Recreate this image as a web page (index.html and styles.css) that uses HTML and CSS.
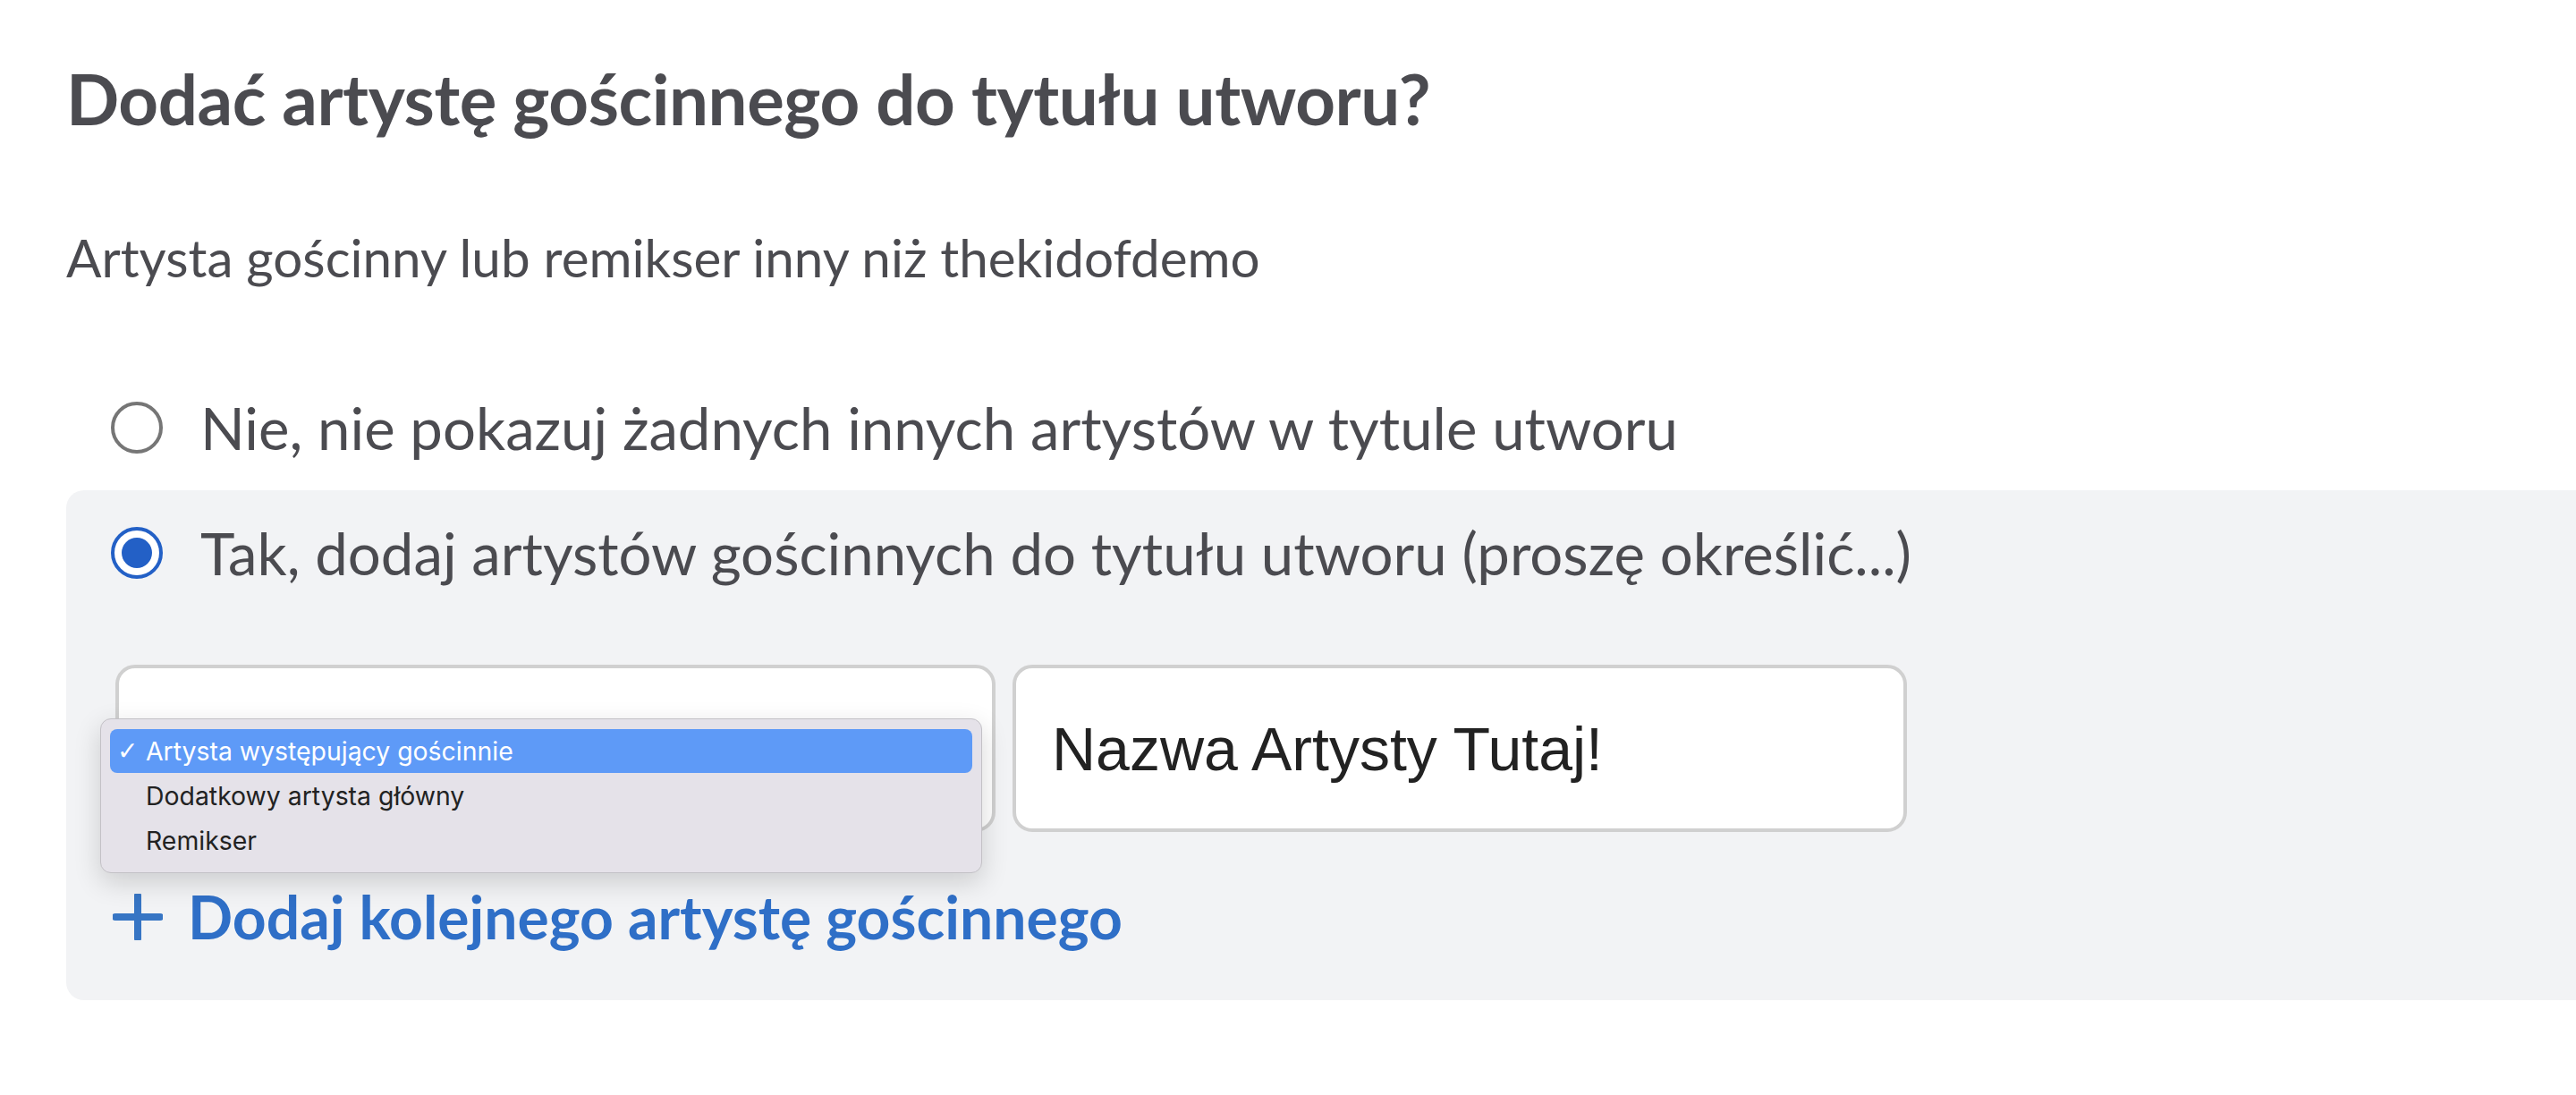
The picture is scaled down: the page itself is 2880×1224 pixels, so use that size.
FILE: index.html
```html
<!DOCTYPE html>
<html lang="pl">
<head>
    <meta charset="UTF-8">
    <meta name="viewport" content="width=device-width, initial-scale=1.0">
    <title>Artysta gościnny</title>
    <link rel="stylesheet" href="styles.css">
</head>
<body>
    <div class="container">
        <h1>Dodać artystę gościnnego do tytułu utworu?</h1>
        <p class="subtitle">Artysta gościnny lub remikser inny niż thekidofdemo</p>

        <!-- Option: no featured artists -->
        <label class="option-row">
            <svg class="radio" width="58" height="58" viewBox="0 0 58 58">
                <circle cx="29" cy="29" r="27" fill="#fff" stroke="#767676" stroke-width="4"/>
            </svg>
            <span>Nie, nie pokazuj żadnych innych artystów w tytule utworu</span>
        </label>

        <!-- Option: add featured artists -->
        <div class="panel">
            <label class="option-row">
                <svg class="radio" width="58" height="58" viewBox="0 0 58 58">
                    <circle cx="29" cy="29" r="27" fill="#fff" stroke="#2360c6" stroke-width="4"/>
                    <circle cx="29" cy="29" r="17" fill="#2360c6"/>
                </svg>
                <span>Tak, dodaj artystów gościnnych do tytułu utworu (proszę określić...)</span>
            </label>

            <div class="artist-row">
                <div class="select-box">
                    <ul class="popup-menu">
                        <li class="menu-item selected"><span class="check">✓</span>Artysta występujący gościnnie</li>
                        <li class="menu-item">Dodatkowy artysta główny</li>
                        <li class="menu-item">Remikser</li>
                    </ul>
                </div>
                <div class="name-input">Nazwa Artysty Tutaj!</div>
            </div>

            <a class="add-link" href="#">
                <svg width="56" height="52" viewBox="0 0 56 52">
                    <path d="M28 2 V50 M3 26 H53" stroke="#3775c4" stroke-width="8" stroke-linecap="round"/>
                </svg>
                <span>Dodaj kolejnego artystę gościnnego</span>
            </a>
        </div>
    </div>
</body>
</html>
```

FILE: styles.css
```css
body {
    margin: 0;
    padding: 0;
    background-color: #fff;
    font-family: 'Lato', 'Noto Sans', sans-serif;
    color: #4b4b50;
    overflow: hidden;
}

.container {
    padding-left: 74px;
}

h1 {
    margin: 62px 0 0 0;
    font-size: 78px;
    line-height: 96px;
    letter-spacing: -0.45px;
    font-weight: 700;
    color: #4b4b50;
}

.subtitle {
    margin: 94px 0 0 0;
    font-size: 58.4px;
    line-height: 70px;
}

.option-row {
    display: flex;
    align-items: center;
    gap: 42px;
    height: 80px;
    padding-left: 50px;
    font-size: 65.3px;
    line-height: 80px;
    margin-top: 116px;
}

.radio {
    flex-shrink: 0;
}

.panel {
    margin-top: 30px;
    margin-right: -40px;
    padding: 30px 0 53px 50px;
    background-color: #f2f3f5;
    border-radius: 20px;
}

.panel .option-row {
    margin-top: 0;
    padding-left: 0;
}

.artist-row {
    display: flex;
    gap: 19px;
    margin: 85px 0 0 5px;
}

.select-box,
.name-input {
    height: 179px;
    border: 4px solid #d0d0d0;
    border-radius: 22px;
    background-color: #fff;
}

.select-box {
    position: relative;
    width: 976px;
}

.name-input {
    width: 952px;
    padding-left: 40px;
    display: flex;
    align-items: center;
    font-family: 'Liberation Sans', Arial, sans-serif;
    font-size: 68px;
    color: #222;
}

/* native popup menu drawn over the select */
.popup-menu {
    position: absolute;
    left: -21px;
    top: 56px;
    width: 964px;
    margin: 0;
    padding: 11px 10px 10px 10px;
    list-style: none;
    background-color: #e5e2e9;
    border: 1px solid #c3c1c6;
    border-radius: 12px;
    box-shadow: 0 10px 30px rgba(0, 0, 0, 0.16);
}

.menu-item {
    position: relative;
    height: 50px;
    padding-left: 40px;
    font-family: 'Inter', 'Roboto', sans-serif;
    font-size: 28.4px;
    line-height: 50px;
    color: #222;
}

.menu-item.selected {
    height: 49px;
    margin-bottom: 1px;
    background-color: #5e9af7;
    border-radius: 8px;
    color: #fff;
}

.check {
    position: absolute;
    left: 8px;
    top: 0;
    font-family: 'DejaVu Sans', sans-serif;
    font-size: 28px;
}

.add-link {
    display: flex;
    align-items: center;
    gap: 28px;
    margin: 55px 0 0 2px;
    font-size: 66px;
    line-height: 80px;
    font-weight: 700;
    color: #2f6fc7;
    text-decoration: none;
}
```
